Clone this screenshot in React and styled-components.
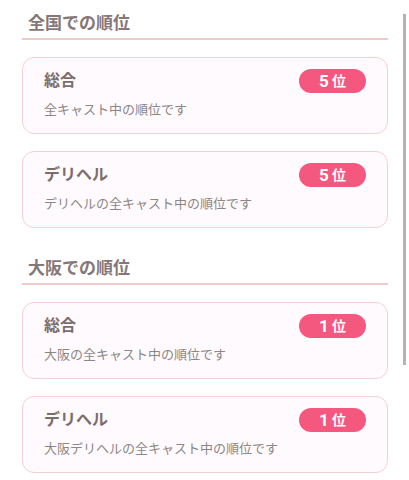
import React from 'react'
import styled, { createGlobalStyle } from 'styled-components'

const GlobalStyle = createGlobalStyle`
  html, body {
    margin: 0;
    padding: 0;
    background: #ffffff;
    overflow: hidden;
  }
  * { box-sizing: border-box; }
`

const Page = styled.div`
  position: relative;
  height: 100vh;
  overflow: hidden;
  background: #ffffff;
  font-family: Roboto, "Noto Sans CJK JP", sans-serif;
`

// scroll indicator laid over the right edge
const ScrollThumb = styled.div`
  position: absolute;
  top: 14px;
  right: 3px;
  width: 3px;
  height: 351px;
  background: #b3b3b3;
`

const Content = styled.div`
  display: flex;
  flex-direction: column;
  gap: 17px;
  padding: 0 21px 0 22px;
`

const Section = styled.section`
  display: flex;
  flex-direction: column;
  gap: 17px;
`

const Heading = styled.h2`
  margin: 0;
  padding: 11px 0 3px 6px;
  font-size: 17px;
  line-height: 24px;
  font-weight: 700;
  color: #857777;
  border-bottom: 2px solid #f1cbcc;
`

const Card = styled.div`
  display: flex;
  flex-direction: column;
  gap: 8px;
  padding: 11px 21px 14px;
  border: 1px solid #f6cfd4;
  border-radius: 12px;
  background: #fffafd;
`

const Row = styled.div`
  display: flex;
  align-items: center;
  justify-content: space-between;
  height: 24px;
`

const Title = styled.div`
  font-size: 16px;
  font-weight: 700;
  color: #7c6d6d;
  line-height: 24px;
`

const Badge = styled.div`
  display: flex;
  align-items: center;
  justify-content: center;
  gap: 3px;
  width: 67px;
  height: 24px;
  border-radius: 12px;
  background: #f5587f;
  color: #ffffff;
  font-weight: 700;
`

const Num = styled.span`
  font-size: 17px;
  line-height: 1;
`

const Unit = styled.span`
  font-size: 14px;
  line-height: 1;
`

const Note = styled.div`
  font-size: 13px;
  line-height: 18px;
  color: #8d8686;
`

const data = [
  {
    area: '全国',
    items: [
      { title: '総合', rank: 5, note: '全キャスト中の順位です' },
      { title: 'デリヘル', rank: 5, note: 'デリヘルの全キャスト中の順位です' },
    ],
  },
  {
    area: '大阪',
    items: [
      { title: '総合', rank: 1, note: '大阪の全キャスト中の順位です' },
      { title: 'デリヘル', rank: 1, note: '大阪デリヘルの全キャスト中の順位です' },
    ],
  },
]

export default function App() {
  return (
    <>
      <GlobalStyle />
      <Page>
        <Content>
          {data.map((sec) => (
            <Section key={sec.area}>
              <Heading>{sec.area}での順位</Heading>
              {sec.items.map((it) => (
                <Card key={it.title}>
                  <Row>
                    <Title>{it.title}</Title>
                    <Badge>
                      <Num>{it.rank}</Num>
                      <Unit>位</Unit>
                    </Badge>
                  </Row>
                  <Note>{it.note}</Note>
                </Card>
              ))}
            </Section>
          ))}
        </Content>
        <ScrollThumb />
      </Page>
    </>
  )
}
